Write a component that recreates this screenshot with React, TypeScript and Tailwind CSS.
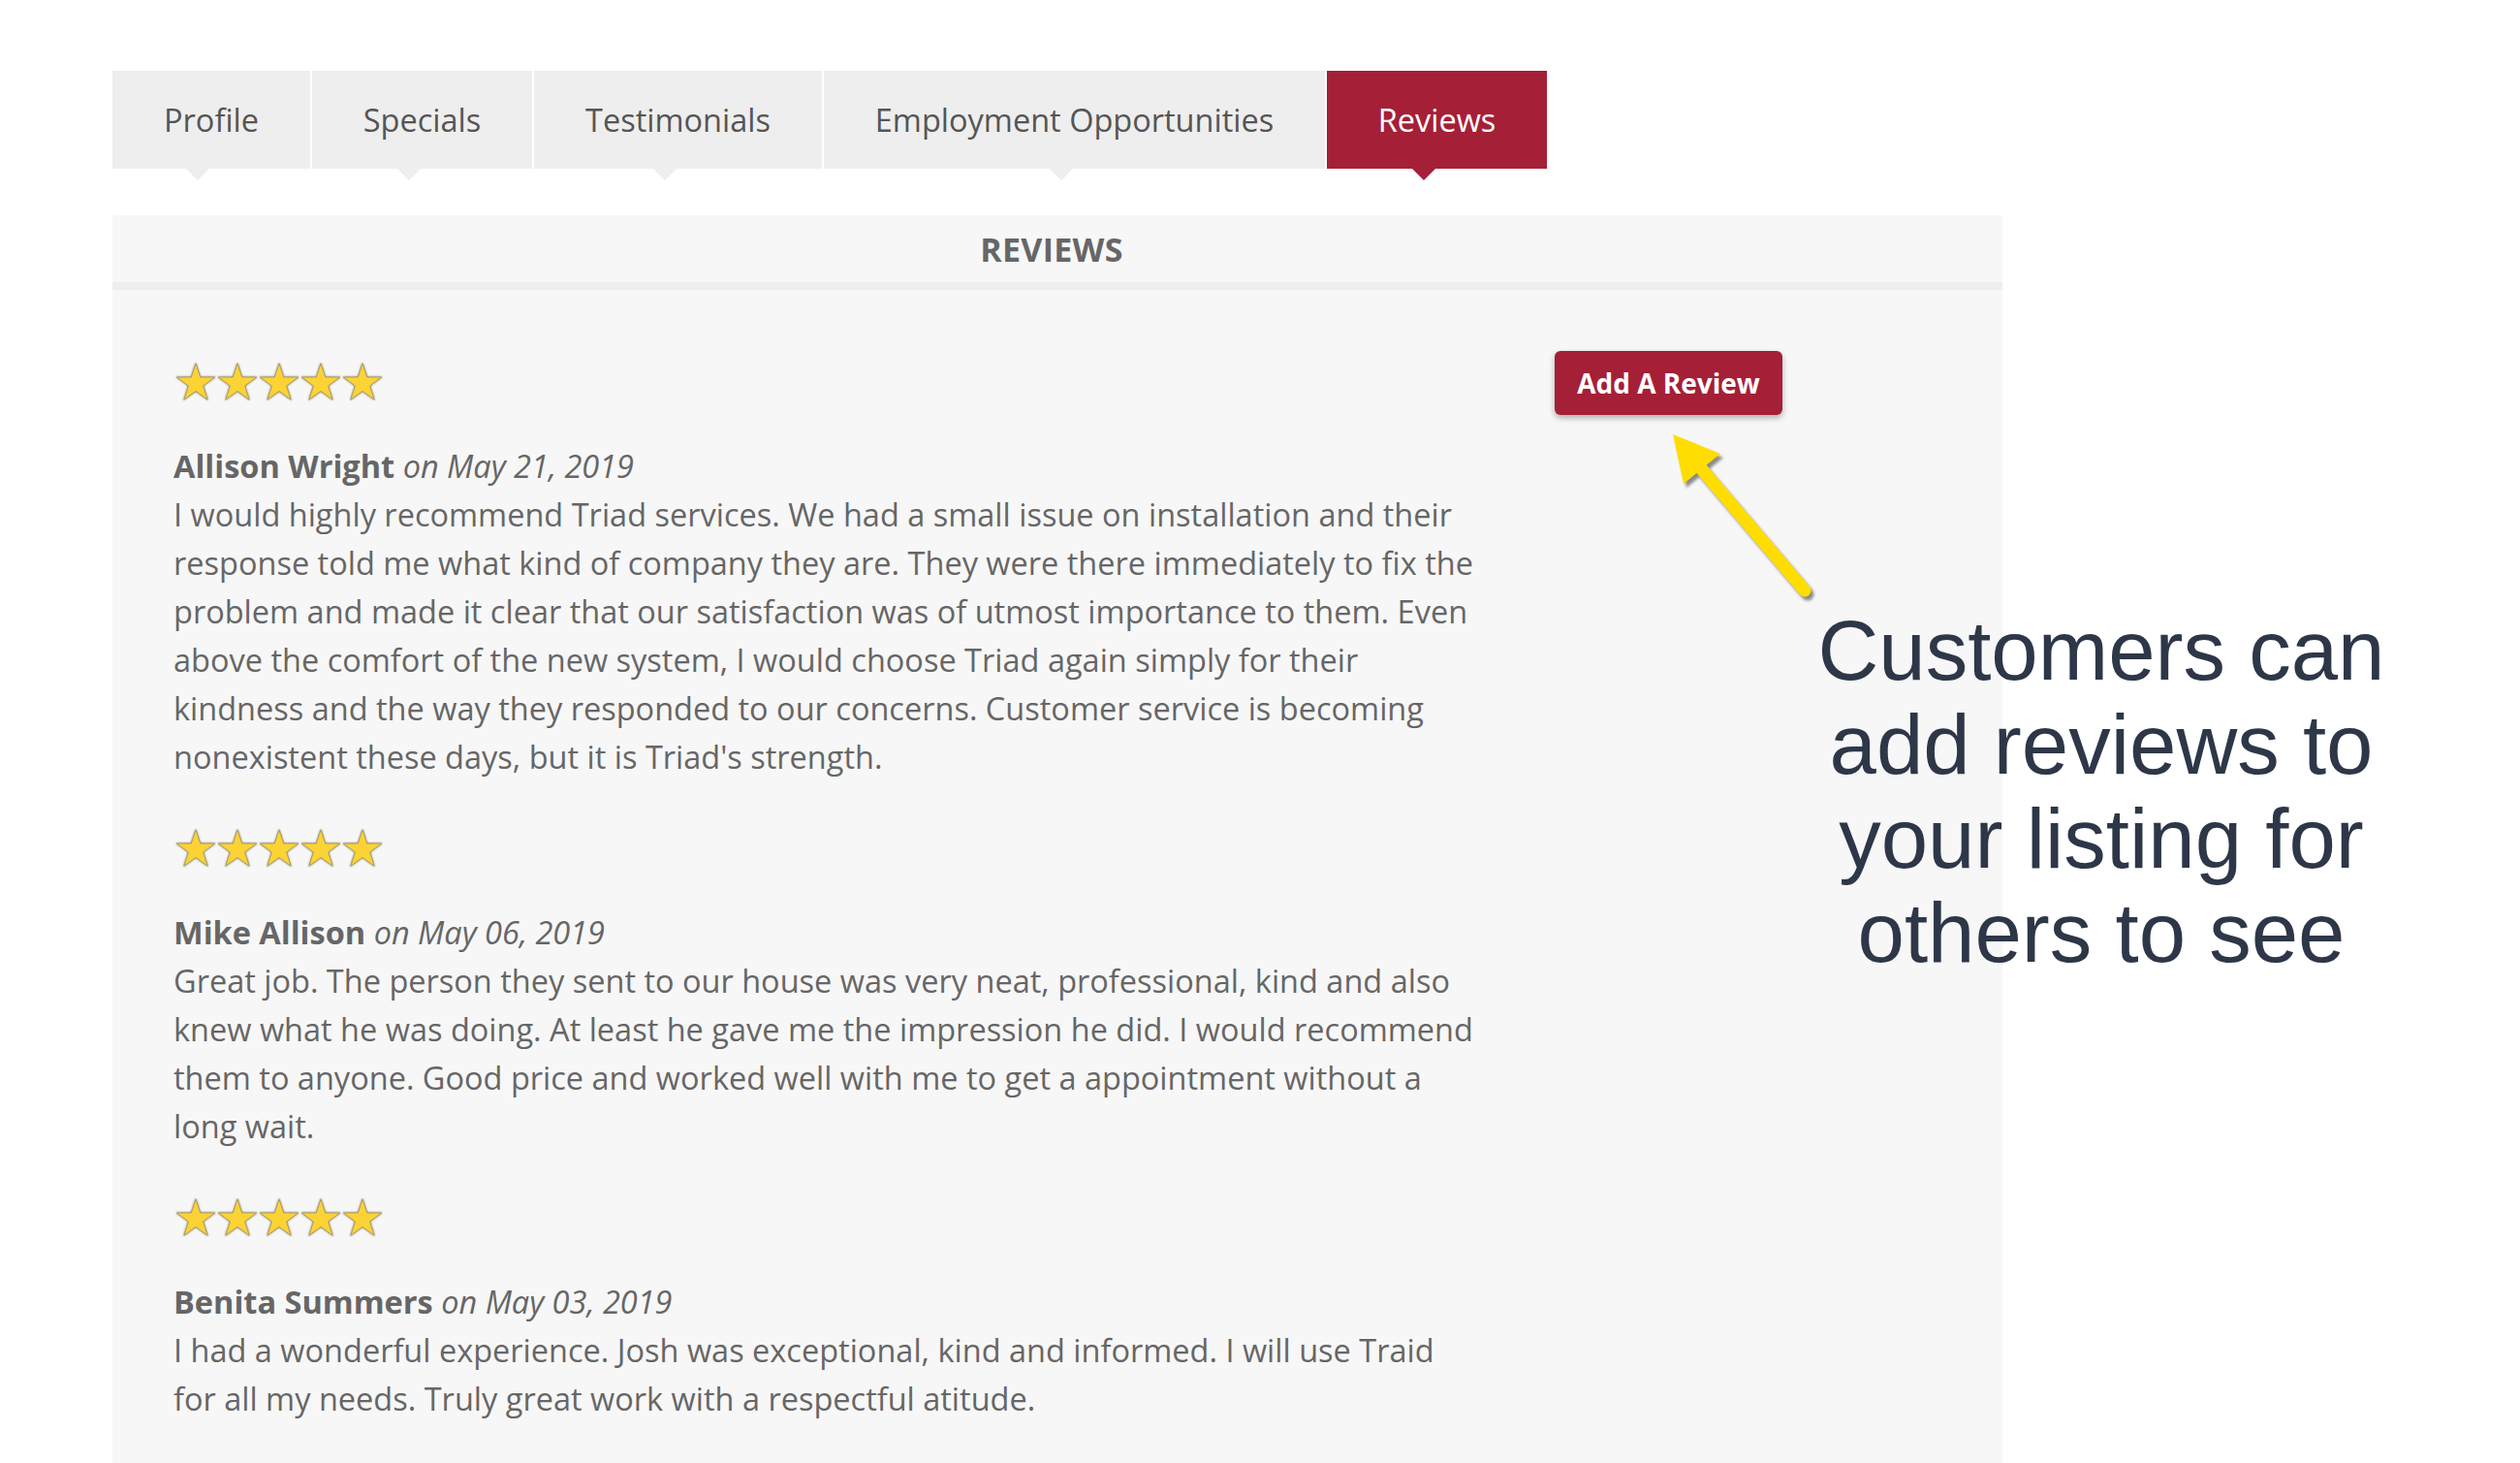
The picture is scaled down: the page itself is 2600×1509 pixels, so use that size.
import React from 'react'

const tabs = [
  { label: 'Profile', w: 'w-[204px]' },
  { label: 'Specials', w: 'w-[227px]' },
  { label: 'Testimonials', w: 'w-[297px]' },
  { label: 'Employment Opportunities', w: 'w-[517px]' },
  { label: 'Reviews', w: 'w-[227px]', active: true },
]

const reviews = [
  {
    name: 'Allison Wright',
    date: 'May 21, 2019',
    text: "I would highly recommend Triad services. We had a small issue on installation and their response told me what kind of company they are. They were there immediately to fix the problem and made it clear that our satisfaction was of utmost importance to them. Even above the comfort of the new system, I would choose Triad again simply for their kindness and the way they responded to our concerns. Customer service is becoming nonexistent these days, but it is Triad's strength.",
  },
  {
    name: 'Mike Allison',
    date: 'May 06, 2019',
    text: 'Great job. The person they sent to our house was very neat, professional, kind and also knew what he was doing. At least he gave me the impression he did. I would recommend them to anyone. Good price and worked well with me to get a appointment without a long wait.',
  },
  {
    name: 'Benita Summers',
    date: 'May 03, 2019',
    text: 'I had a wonderful experience. Josh was exceptional, kind and informed. I will use Traid for all my needs. Truly great work with a respectful atitude.',
  },
]

function Star() {
  return (
    <svg width="43" height="40" viewBox="1 0 43 40" className="drop-shadow-[0_0_1px_rgba(90,80,50,0.7)]">
      <polygon
        points="22,0.8 26.7,15 41.8,15 29.6,24 34.2,38.3 22,29.5 9.8,38.3 14.4,24 2.2,15 17.3,15"
        fill="#fbd334"
        stroke="#a8995f"
        strokeWidth="0.9"
        strokeLinejoin="round"
      />
    </svg>
  )
}

function Stars() {
  return (
    <div className="flex ml-[2px] h-[40px]">
      {[0, 1, 2, 3, 4].map((i) => (
        <Star key={i} />
      ))}
    </div>
  )
}

export default function App() {
  return (
    <div className="relative min-h-screen bg-white font-['Open_Sans',sans-serif] pt-[73px] pb-[80px]">
      {/* tabs */}
      <div className="flex gap-[2px] ml-[116px]">
        {tabs.map((tab) => (
          <div
            key={tab.label}
            className={
              tab.active
                ? `relative ${tab.w} h-[101px] pt-[2px] flex items-center justify-center bg-[#a51f37] text-white text-[32.5px]`
                : `relative ${tab.w} h-[101px] pt-[2px] flex items-center justify-center bg-[#eeeeee] text-[#555555] text-[32.5px]`
            }
          >
            {tab.label}
            <span
              className={
                tab.active
                  ? 'absolute top-full left-[calc(50%-26px)] w-0 h-0 border-l-[12px] border-r-[12px] border-t-[12px] border-l-transparent border-r-transparent border-t-[#a51f37]'
                  : 'absolute top-full left-[calc(50%-26px)] w-0 h-0 border-l-[12px] border-r-[12px] border-t-[12px] border-l-transparent border-r-transparent border-t-[#eeeeee]'
              }
            />
          </div>
        ))}
      </div>

      {/* panel */}
      <div className="mt-[48px] ml-[116px] w-[1950px] bg-[#f7f7f7] pb-[120px]">
        <div className="h-[77px] pr-[12px] pt-[2px] flex items-center justify-center border-b-8 border-[#eeeeee]">
          <h2 className="text-[34px] font-bold text-[#666666] tracking-[0.3px]">REVIEWS</h2>
        </div>

        <div className="flex pl-[63px] pt-[63px]">
          <div className="w-[1346px] pt-[12px] flex flex-col gap-[49px]">
            {reviews.map((r) => (
              <div key={r.name}>
                <Stars />
                <div className="mt-[42px] text-[32.5px] leading-[50px] text-[#666666]">
                  <p>
                    <span className="font-bold">{r.name}</span>{' '}
                    <span className="italic">on {r.date}</span>
                  </p>
                  <p>{r.text}</p>
                </div>
              </div>
            ))}
          </div>

          <div className="ml-[79px]">
            <button className="w-[235px] h-[66px] rounded-[6px] bg-[#a51f37] text-white text-[28px] font-bold shadow-[0_3px_6px_rgba(0,0,0,0.3)]">
              Add A Review
            </button>
          </div>
        </div>
      </div>

      {/* annotation arrow */}
      <svg className="absolute left-[1702px] top-[432px]" width="200" height="200" viewBox="0 0 200 200">
        <defs>
          <filter id="sh" x="-20%" y="-20%" width="140%" height="140%">
            <feGaussianBlur stdDeviation="1.6" />
          </filter>
        </defs>
        <g transform="translate(3,4)" opacity="0.55" filter="url(#sh)">
          <line x1="52" y1="50" x2="160" y2="177" stroke="#333" strokeWidth="13" strokeLinecap="round" />
          <polygon points="24,16 73,36 35,67" fill="#333" />
        </g>
        <line x1="52" y1="50" x2="160" y2="177" stroke="#ffdd00" strokeWidth="13" strokeLinecap="round" />
        <polygon points="24,16 73,36 35,67" fill="#ffdd00" />
      </svg>

      {/* annotation text */}
      <div className="absolute left-[1868px] top-[622px] w-[600px] text-center font-['Liberation_Sans',Arial,sans-serif] text-[87px] leading-[97px] text-[#2d3748]">
        Customers can
        <br />
        add reviews to
        <br />
        your listing for
        <br />
        others to see
      </div>
    </div>
  )
}
